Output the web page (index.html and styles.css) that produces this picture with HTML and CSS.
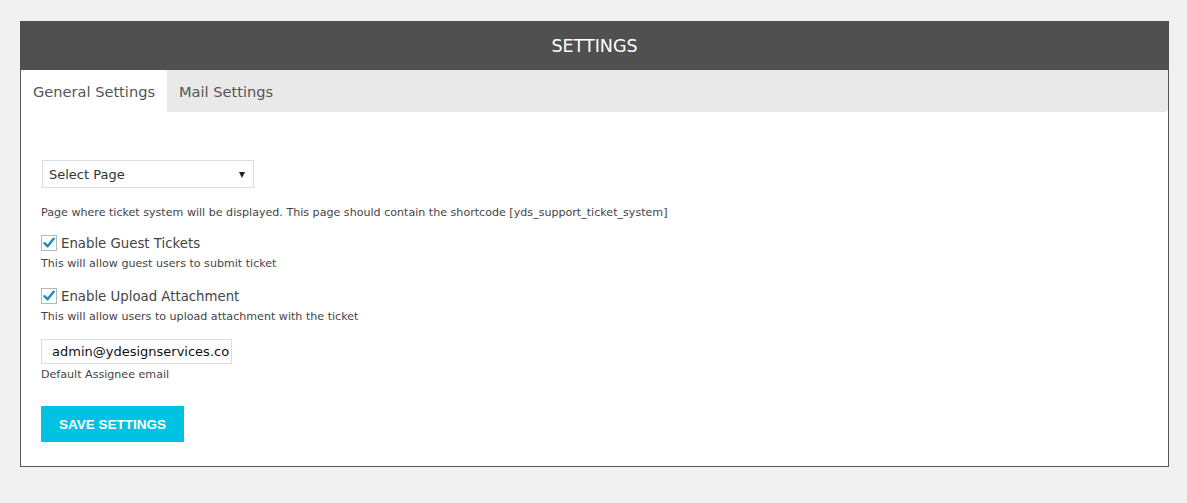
FILE: index.html
```html
<!DOCTYPE html>
<html>
<head>
<meta charset="utf-8">
<link rel="stylesheet" href="styles.css">
</head>
<body>
<div class="panel">
  <div class="panel-head">SETTINGS</div>
  <div class="panel-body">
    <div class="tabs">
      <div class="tab active">General Settings</div>
      <div class="tab">Mail Settings</div>
    </div>
    <div class="content">
      <div class="select">
        <span>Select Page</span>
        <span class="arrow"></span>
      </div>
      <p class="help help-page">Page where ticket system will be displayed. This page should contain the shortcode [yds_support_ticket_system]</p>
      <label class="check-row">
        <span class="checkbox"><svg width="12" height="12" viewBox="0 0 12 12"><path d="M1.5 6.2 L4.6 9.3 L10.6 1.8" fill="none" stroke="#1e8cbe" stroke-width="2.4" stroke-linecap="round" stroke-linejoin="round"/></svg></span>
        <span class="check-label">Enable Guest Tickets</span>
      </label>
      <p class="help help-check">This will allow guest users to submit ticket</p>
      <label class="check-row">
        <span class="checkbox"><svg width="12" height="12" viewBox="0 0 12 12"><path d="M1.5 6.2 L4.6 9.3 L10.6 1.8" fill="none" stroke="#1e8cbe" stroke-width="2.4" stroke-linecap="round" stroke-linejoin="round"/></svg></span>
        <span class="check-label">Enable Upload Attachment</span>
      </label>
      <p class="help help-check">This will allow users to upload attachment with the ticket</p>
      <div class="email">admin@ydesignservices.co</div>
      <p class="help help-email">Default Assignee email</p>
      <div class="btn">SAVE SETTINGS</div>
    </div>
  </div>
</div>
</body>
</html>
```

FILE: styles.css
```css
* { box-sizing: border-box; }
html, body { margin: 0; padding: 0; }
body {
  background: #f1f1f1;
  font-family: "DejaVu Sans", Verdana, sans-serif;
  color: #444;
  padding: 21px 18px 0 20px;
}
.panel {
  width: 1149px;
}
.panel-head {
  height: 49px;
  background: #505050;
  color: #fff;
  font-size: 17.5px;
  display: flex;
  align-items: center;
  justify-content: center;
  padding-top: 1px;
}
.panel-body {
  background: #fff;
  border: 1px solid #555;
  border-top: none;
  height: 397px;
}
.tabs {
  display: flex;
  height: 42px;
  background: #e9e9e9;
  border-bottom-right-radius: 4px;
}
.tab {
  padding: 0 12px;
  font-size: 14.6px;
  color: #555;
  display: flex;
  align-items: center;
  padding-top: 1px;
}
.tab.active {
  background: #fff;
  width: 146px;
}
.content {
  padding: 48px 20px 0 20px;
  display: flex;
  flex-direction: column;
  align-items: flex-start;
}
.select {
  margin-left: 1px;
  width: 212px;
  height: 28px;
  border: 1px solid #ddd;
  display: flex;
  align-items: center;
  justify-content: space-between;
  padding: 0 8px 0 6px;
  font-size: 13px;
  color: #333;
}
.arrow {
  width: 0; height: 0;
  border-left: 3.5px solid transparent;
  border-right: 3.5px solid transparent;
  border-top: 6px solid #222;
  margin-top: 1px;
}
.help {
  margin: 0;
  font-size: 11.1px;
  line-height: 14px;
  color: #444;
}
.help-page { margin-top: 18px; }
.check-row {
  display: flex;
  align-items: center;
  margin-top: 14px;
  height: 18px;
}
.checkbox {
  width: 16px;
  height: 16px;
  border: 1px solid #b4b9be;
  background: #fff;
  display: flex;
  align-items: center;
  justify-content: center;
  margin-right: 4px;
}
.check-label {
  font-size: 13.3px;
  color: #444;
}
.help-check { margin-top: 5px; }
.help-check + .check-row { margin-top: 16px; }
.email {
  margin-top: 15px;
  width: 191px;
  height: 25px;
  border: 1px solid #ddd;
  font-size: 13px;
  color: #111;
  display: flex;
  align-items: center;
  padding-left: 10px;
  white-space: nowrap;
  overflow: hidden;
}
.help-email { margin-top: 4px; }
.btn {
  margin-top: 24px;
  width: 143px;
  height: 36px;
  background: #00c3e3;
  color: #fff;
  font-family: "Liberation Sans", Arial, sans-serif;
  font-weight: bold;
  font-size: 13.5px;
  display: flex;
  align-items: center;
  justify-content: center;
}
```
